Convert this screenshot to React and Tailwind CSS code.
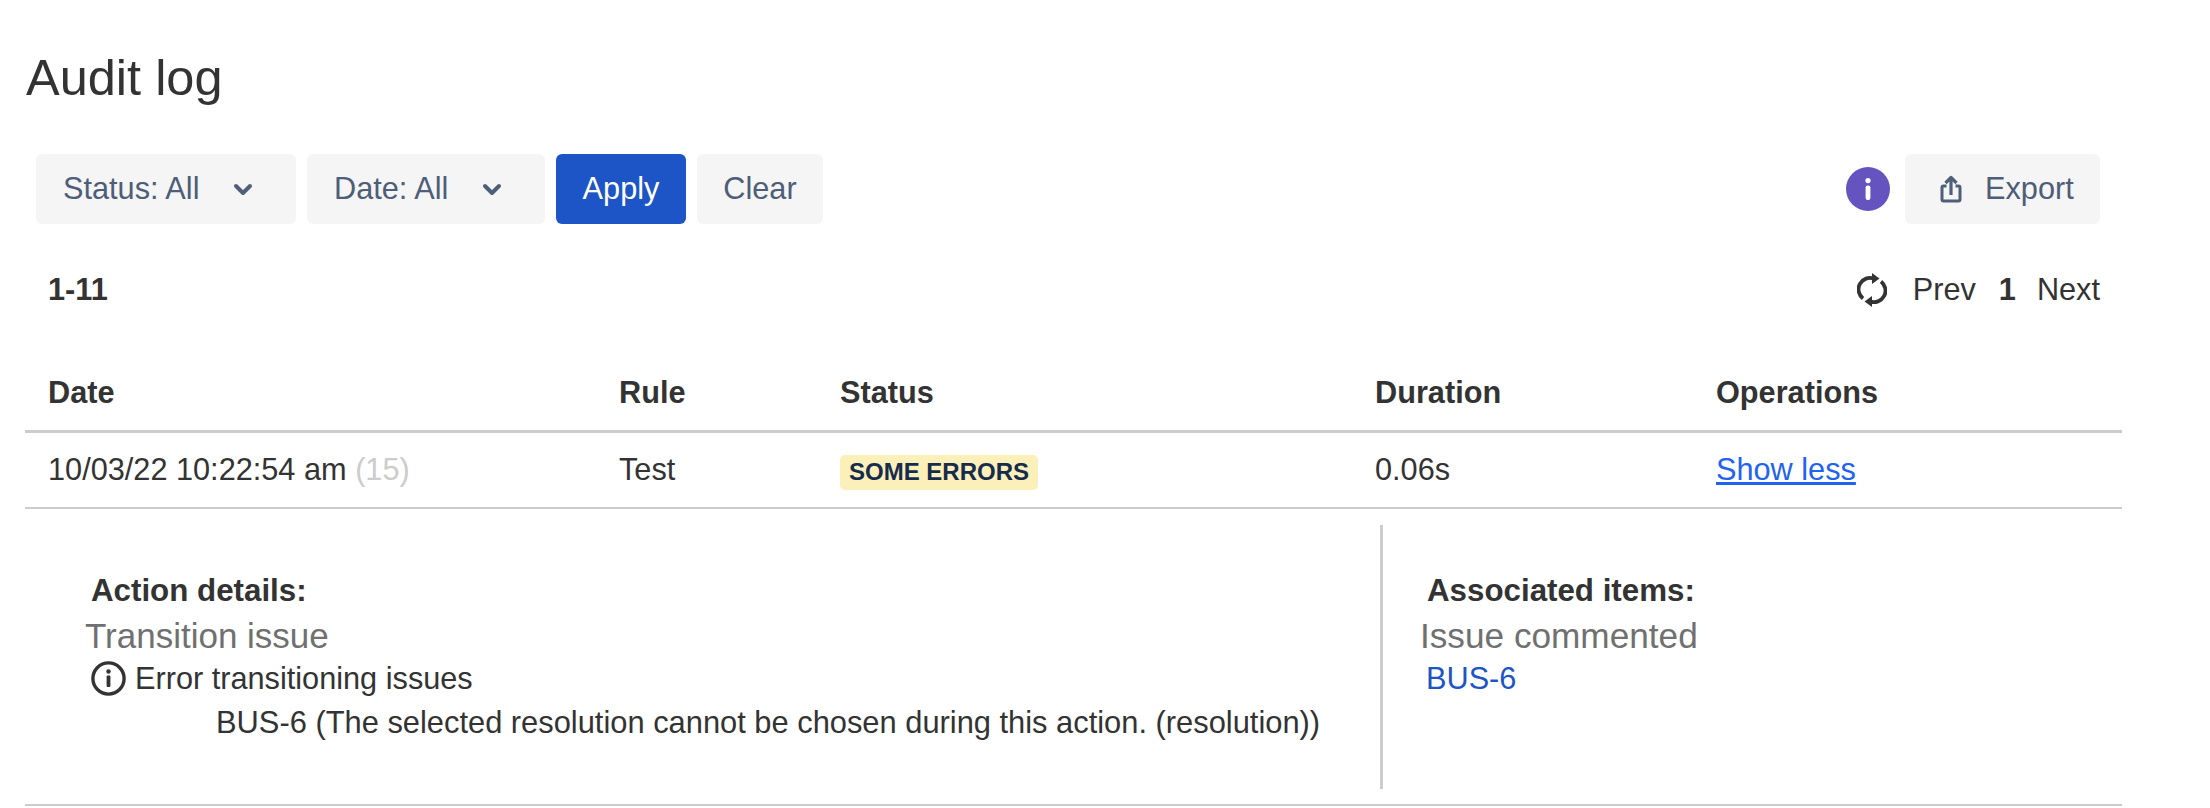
import React from 'react';

function Chevron() {
  return (
    <svg width="20" height="13" viewBox="0 0 20 13" className="shrink-0">
      <path d="M3 3l7 7 7-7" fill="none" stroke="#505f79" strokeWidth="4" strokeLinecap="round" strokeLinejoin="round" />
    </svg>
  );
}

function ExportIcon() {
  return (
    <svg width="22" height="28" viewBox="0 0 22 28" className="shrink-0">
      <path d="M6.5 11H3.5A1.5 1.5 0 0 0 2 12.5v12A1.5 1.5 0 0 0 3.5 26h15a1.5 1.5 0 0 0 1.5-1.5v-12a1.5 1.5 0 0 0-1.5-1.5h-3" fill="none" stroke="#505f79" strokeWidth="3" />
      <path d="M11 20V3M5.5 8L11 2.5 16.5 8" fill="none" stroke="#505f79" strokeWidth="3.2" strokeLinejoin="round" />
    </svg>
  );
}

function RefreshIcon() {
  return (
    <svg width="30" height="34" viewBox="0 0 30 34" className="shrink-0">
      <path d="M6 25.5A11.5 11.5 0 0 1 17 5.6" fill="none" stroke="#333333" strokeWidth="3.8" />
      <path d="M24 8.5A11.5 11.5 0 0 1 13 28.4" fill="none" stroke="#333333" strokeWidth="3.8" />
      <path d="M15 0l7.5 5.5L15 11z" fill="#333333" />
      <path d="M15 23l-7.5 5.5L15 34z" fill="#333333" />
    </svg>
  );
}

function InfoOutline() {
  return (
    <svg width="35" height="35" viewBox="0 0 35 35" className="shrink-0">
      <circle cx="17.5" cy="17.5" r="15.6" fill="none" stroke="#333333" strokeWidth="3.4" />
      <circle cx="17.5" cy="10.5" r="2.2" fill="#333333" />
      <rect x="15.6" y="14.5" width="3.8" height="11.5" rx="1" fill="#333333" />
    </svg>
  );
}

function FilterButton({ label, width }) {
  return (
    <button className={`flex h-[70px] items-center justify-between rounded-md bg-[#f5f5f5] pl-[27px] pr-[43px] text-[#4e5d78] ${width}`}>
      <span>{label}</span>
      <Chevron />
    </button>
  );
}

export default function App() {
  return (
    <div className="min-h-screen bg-white font-['Liberation_Sans',Arial,sans-serif] text-[30.7px] leading-[36px] text-[#333333]">
      <div className="w-[2122px] pl-[25px] pt-[50px]">
        <h1 className="ml-px text-[50.5px] leading-[56px] font-normal">Audit log</h1>

        {/* Filters */}
        <div className="mt-[48px] flex items-center pl-[11px] pr-[22px]">
          <FilterButton label="Status: All" width="w-[260px]" />
          <div className="ml-[11px]">
            <FilterButton label="Date: All" width="w-[238px]" />
          </div>
          <button className="ml-[11px] h-[70px] w-[130px] rounded-md bg-[#1d54c6] text-white">Apply</button>
          <button className="ml-[11px] h-[70px] w-[126px] rounded-md bg-[#f5f5f5] text-[#4e5d78]">Clear</button>
          <div className="ml-auto flex items-center gap-[15px]">
            <div className="flex h-[44px] w-[44px] items-center justify-center rounded-full bg-[#6554c0]">
              <svg width="6" height="22" viewBox="0 0 6 22">
                <circle cx="3" cy="2.6" r="2.6" fill="#ffffff" />
                <rect x="0.6" y="7.5" width="4.8" height="14.5" rx="2" fill="#ffffff" />
              </svg>
            </div>
            <button className="flex h-[70px] w-[195px] items-center gap-[23px] rounded-md bg-[#f5f5f5] pl-[35px] text-[#4e5d78]">
              <ExportIcon />
              <span>Export</span>
            </button>
          </div>
        </div>

        {/* Pagination */}
        <div className="mt-[48px] flex items-center justify-between pl-[23px] pr-[22px]">
          <span className="font-bold">1-11</span>
          <div className="flex items-center">
            <RefreshIcon />
            <span className="ml-[26px]">Prev</span>
            <span className="ml-[23px] font-bold">1</span>
            <span className="ml-[21px]">Next</span>
          </div>
        </div>

        {/* Table */}
        <div className="mt-[67px] grid grid-cols-[571px_222px_534px_341px_1fr] border-b-[3px] border-[#cccccc] pb-[19px] pl-[23px] font-bold">
          <div>Date</div>
          <div>Rule</div>
          <div className="ml-[-1px]">Status</div>
          <div>Duration</div>
          <div>Operations</div>
        </div>
        <div className="grid grid-cols-[571px_222px_534px_341px_1fr] border-b-2 border-[#cccccc] pb-[17px] pl-[23px] pt-[19px]">
          <div>
            10/03/22 10:22:54 am <span className="text-[#cccccc]">(15)</span>
          </div>
          <div>Test</div>
          <div>
            <span className="ml-[-1px] inline-flex h-[35px] items-center rounded-[5px] bg-[#fbefba] px-[9px] text-[24px] font-bold text-[#172b4d]">SOME ERRORS</span>
          </div>
          <div>0.06s</div>
          <div>
            <a href="#" className="text-[#1f63f0] underline">Show less</a>
          </div>
        </div>

        {/* Expanded row */}
        <div className="flex border-b-2 border-[#cccccc] pb-[15px] pt-[16px]">
          <div className="h-[264px] w-[1355px] pt-[48px]">
            <div className="pl-[66px] text-[31.3px] font-bold">Action details:</div>
            <div className="mt-[7px] pl-[60px] text-[35px] leading-[40px] text-[#707070]">Transition issue</div>
            <div className="mt-[5px] flex items-center pl-[66px]">
              <InfoOutline />
              <span className="ml-[9px]">Error transitioning issues</span>
            </div>
            <div className="mt-[8px] pl-[191px] text-[30.85px]">BUS-6 (The selected resolution cannot be chosen during this action. (resolution))</div>
          </div>
          <div className="h-[264px] flex-1 border-l-[3px] border-[#cccccc] pt-[48px]">
            <div className="pl-[44px] text-[31.3px] font-bold">Associated items:</div>
            <div className="mt-[7px] pl-[37px] text-[35.2px] leading-[40px] text-[#707070]">Issue commented</div>
            <div className="mt-[5px] pl-[43px] text-[#1d54c6]">BUS-6</div>
          </div>
        </div>
      </div>
    </div>
  );
}
